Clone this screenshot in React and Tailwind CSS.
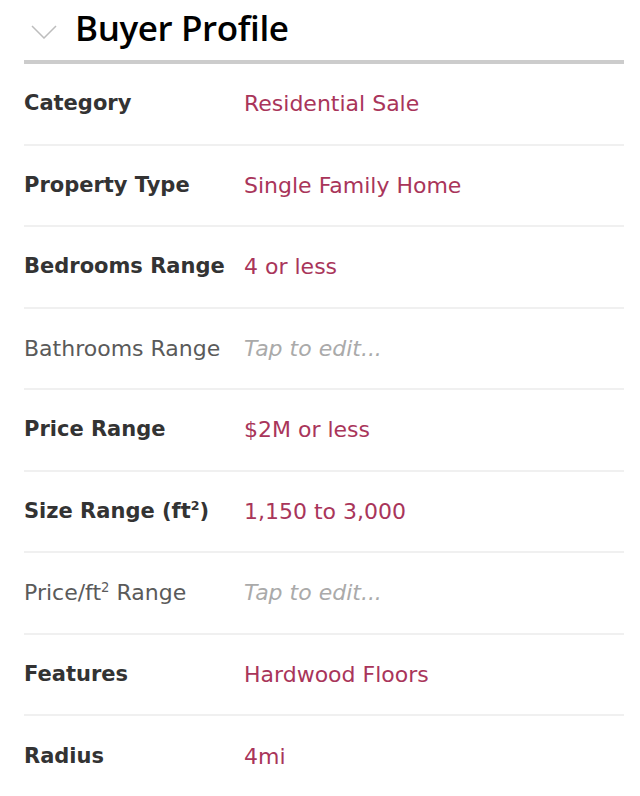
import React from "react";

const rows = [
  { label: "Category", value: "Residential Sale" },
  { label: "Property Type", value: "Single Family Home" },
  { label: "Bedrooms Range", value: "4 or less" },
  { label: "Bathrooms Range", value: null },
  { label: "Price Range", value: "$2M or less" },
  { label: <>Size Range (ft<sup className="text-[0.6em] -top-[0.6em]">2</sup>)</>, value: "1,150 to 3,000" },
  { label: <>Price/ft<sup className="text-[0.6em] -top-[0.6em]">2</sup> Range</>, value: null },
  { label: "Features", value: "Hardwood Floors" },
  { label: "Radius", value: "4mi" },
];

const App = () => {
  return (
    <div className="min-h-[796px] bg-white pl-6 pr-4 font-['DejaVu_Sans',sans-serif] select-none">
      <div className="flex h-[64px] items-center gap-[18px] border-b-4 border-[#cccccc]">
        <svg width="26" height="14" viewBox="0 0 26 14" className="ml-[7px] mt-1">
          <path d="M1 1 L13 13 L25 1" fill="none" stroke="#bdbdbd" strokeWidth="1.5" />
        </svg>
        <h1 className="-mt-1 font-['Open_Sans',sans-serif] text-[35px] font-semibold text-black tracking-[-0.4px]">Buyer Profile</h1>
      </div>
      {rows.map((row, i) => (
        <div
          key={i}
          className={`flex h-[81.5px] items-center text-[22px] ${i < rows.length - 1 ? "border-b-2 border-[#f0f0f0]" : ""}`}
        >
          <div className={`w-[220px] shrink-0 ${row.value ? "text-[21px] font-bold text-[#333333]" : "text-[#5a5a5a]"}`}>
            {row.label}
          </div>
          {row.value ? (
            <div className="text-[#a9355a]">{row.value}</div>
          ) : (
            <div className="italic text-[#aaaaaa]">Tap to edit...</div>
          )}
        </div>
      ))}
    </div>
  );
};

export default App;
